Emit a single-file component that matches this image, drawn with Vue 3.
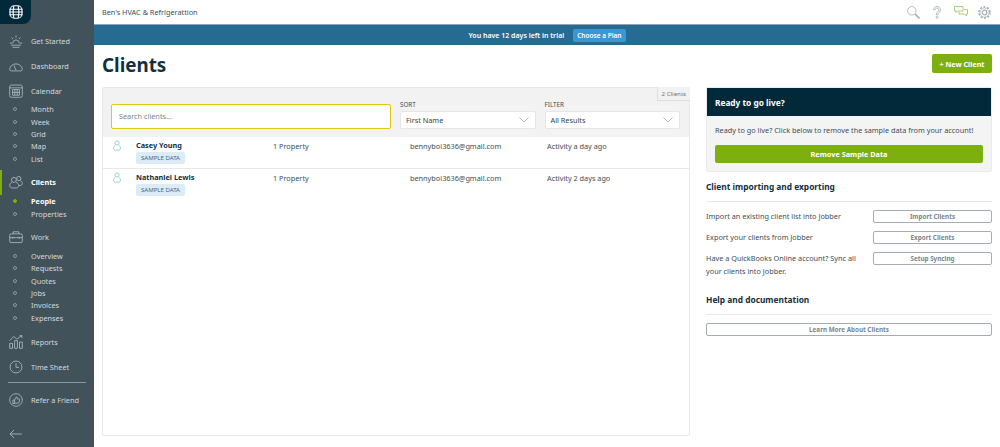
<template>
  <div class="app">
    <aside class="sidebar">
      <div class="logo">
        <svg width="14" height="14" viewBox="0 0 14 14" fill="none" stroke="#fff" stroke-width="1.1">
          <rect x="1" y="0.8" width="12" height="12.4" rx="4.5" />
          <path d="M0.500 4.300h13M0.500 7h13M0.500 9.700h13M4.800 1c-1 4-1 8 0 12M9.200 1c1 4 1 8 0 12" />
        </svg>
      </div>
      <nav class="nav">
        <template v-for="group in nav" :key="group.label">
          <div v-if="group.divider" class="divider"></div>
          <div class="nav-item" :class="{ active: group.active }">
            <span class="nav-icon">
              <svg width="14" height="14" viewBox="0 0 20 20" fill="none" stroke="#b9c2c7" stroke-width="1.1" v-html="group.icon"></svg>
            </span>
            <span>{{ group.label }}</span>
          </div>
          <div v-if="group.children" class="sub-list">
            <div v-for="child in group.children" :key="child" class="sub-item" :class="{ current: child === 'People' }">
              <span class="dot"></span>{{ child }}
            </div>
          </div>
        </template>
      </nav>
      <div class="collapse">
        <svg width="13" height="10" viewBox="0 0 13 10" fill="none" stroke="#b9c2c7" stroke-width="0.8">
          <path d="M13 5H1M5 1 1 5l4 4" />
        </svg>
      </div>
    </aside>

    <div class="main">
      <header class="topbar">
        <span class="company">Ben's HVAC &amp; Refrigerattion</span>
        <div class="top-icons">
          <svg width="13" height="13" viewBox="0 0 13 13" fill="none" stroke="#a3adb2" stroke-width="0.8">
            <circle cx="4.800" cy="4.800" r="4.200" />
            <path d="m8 8 4.500 4.500" stroke-width="1.600" />
          </svg>
          <svg width="8" height="13" viewBox="0 0 8 13" fill="none" stroke="#a3adb2" stroke-width="0.8">
            <path d="M0.500 3.800C0.500 1.800 2 0.500 4 0.500s3.500 1.300 3.500 3.300c0 2.400-2.500 2.500-2.500 5H3.200c0-3 2.700-3 2.700-5C5.900 2.800 5.100 2.100 4 2.100S2.100 2.800 2.100 3.800Z" />
            <circle cx="4" cy="11.300" r="1" />
          </svg>
          <svg width="14" height="12" viewBox="0 0 14 12" fill="none" stroke="#a4c765" stroke-width="0.9">
            <path d="M0.500 0.500h8.500v4.500H3.500L2 6.500V5H0.500ZM10 3.500h3.500v4.500H12.500v2L10.500 8H5V5.500" />
          </svg>
          <svg class="gear" width="13" height="13" viewBox="0 0 13 13" fill="none" stroke="#a3adb2">
            <circle cx="6.500" cy="6.500" r="5.500" stroke-width="1.600" stroke-dasharray="2 1.460" />
            <circle cx="6.500" cy="6.500" r="4.500" stroke-width="0.600" />
            <circle cx="6.500" cy="6.500" r="2.300" stroke-width="1.200" />
          </svg>
        </div>
      </header>

      <div class="trial-banner">
        <span>You have 12 days left in trial</span>
        <button class="plan-btn">Choose a Plan</button>
      </div>

      <div class="content">
        <div class="page-head">
          <h1>Clients</h1>
          <button class="new-btn">+ New Client</button>
        </div>

        <div class="columns">
          <section class="list-card">
            <div class="count-tab">2 Clients</div>
            <div class="list-tools">
              <div class="search">Search clients...</div>
              <div class="tool">
                <label>SORT</label>
                <div class="select">First Name<svg width="10" height="6" viewBox="0 0 10 6" fill="none" stroke="#a3adb2" stroke-width="0.8"><path d="m0.500 0.500 4.500 4.500 4.500-4.500" /></svg></div>
              </div>
              <div class="tool">
                <label>FILTER</label>
                <div class="select">All Results<svg width="10" height="6" viewBox="0 0 10 6" fill="none" stroke="#a3adb2" stroke-width="0.8"><path d="m0.500 0.500 4.500 4.500 4.500-4.500" /></svg></div>
              </div>
            </div>
            <div v-for="client in clients" :key="client.name" class="client-row">
              <svg class="person" width="8" height="11" viewBox="0 0 10 13" fill="none" stroke="#7fcbaa" stroke-width="1">
                <circle cx="5" cy="3.300" r="2.600" />
                <path d="M3 6.500C1.500 7 0.600 8.200 0.600 9.700c0 1.500 1 2.600 2.400 2.600h4c1.400 0 2.400-1.100 2.400-2.600C9.400 8.200 8.500 7 7 6.500" />
              </svg>
              <div class="client-name">
                <strong>{{ client.name }}</strong>
                <span class="badge">SAMPLE DATA</span>
              </div>
              <div class="client-prop">1 Property</div>
              <div class="client-email">bennyboi3636@gmail.com</div>
              <div class="client-activity">{{ client.activity }}</div>
            </div>
          </section>

          <aside class="side">
            <div class="live-card">
              <div class="live-head">Ready to go live?</div>
              <div class="live-body">
                <p>Ready to go live? Click below to remove the sample data from your account!</p>
                <button class="remove-btn">Remove Sample Data</button>
              </div>
            </div>

            <h2>Client importing and exporting</h2>
            <div class="action-row">
              <span>Import an existing client list into Jobber</span>
              <button class="outline-btn">Import Clients</button>
            </div>
            <div class="action-row">
              <span>Export your clients from Jobber</span>
              <button class="outline-btn">Export Clients</button>
            </div>
            <div class="action-row">
              <span>Have a QuickBooks Online account? Sync all your clients into Jobber.</span>
              <button class="outline-btn">Setup Syncing</button>
            </div>

            <h2 class="help">Help and documentation</h2>
            <button class="outline-btn wide">Learn More About Clients</button>
          </aside>
        </div>
      </div>
    </div>
  </div>
</template>

<script setup>
const nav = [
  { label: 'Get Started', icon: '<path d="M5.500 13a4.500 4.500 0 1 1 9 0M1 13h4M15 13h4M3 16h14M5 19h10M10 2v3M3.500 5l2.200 2.200M16.500 5l-2.200 2.200"/>' },
  { label: 'Dashboard', icon: '<path d="M1 15a9 8 0 0 1 18 0c0 1-1 2-2 2H3c-1 0-2-1-2-2ZM10 16 7 9"/>' },
  {
    label: 'Calendar',
    icon: '<rect x="1" y="1.500" width="18" height="17.500" rx="2.500"/><path d="M1 5.500h18M5 8h10v8H5zM8.300 8v8M11.700 8v8M5 12h10"/>',
    children: ['Month', 'Week', 'Grid', 'Map', 'List']
  },
  {
    label: 'Clients',
    active: true,
    icon: '<circle cx="7" cy="7" r="3.500"/><circle cx="14" cy="5" r="3"/><path d="M4 10.500C2 11.500 1 13 1 15s1.500 3.500 3.500 3.500h6c2 0 3.500-1.500 3.500-3.500s-1-3.500-4-4.500M16 8c2 .5 3 2 3 4s-1.500 3-3.500 3H14"/>',
    children: ['People', 'Properties']
  },
  {
    label: 'Work',
    icon: '<rect x="1" y="5.500" width="18" height="12.500" rx="2"/><path d="M6 5.500V2.500h8v3M1 11h18M5.500 9.500v3M14.500 9.500v3"/>',
    children: ['Overview', 'Requests', 'Quotes', 'Jobs', 'Invoices', 'Expenses']
  },
  { label: 'Reports', icon: '<path d="M1 12h4v7H1zM8 8h4v11H8zM15 10h4v9h-4zM1 8l6-6 4 4 7-5M15 1h3.500v3.500"/>' },
  { label: 'Time Sheet', icon: '<circle cx="10" cy="10" r="8.500"/><path d="M10 4.500V10.500h4.500"/>' },
  { label: 'Refer a Friend', divider: true, icon: '<circle cx="10" cy="10" r="9"/><path d="M5.500 10h2.500v5H5.500zM8 10l2.500-4.500c1 0 1.500 1 1 3H14.500c.7 0 1 .6.800 1.200l-1.200 4.300c-.1.400-.5.500-.8.500H8"/>' }
]

const clients = [
  { name: 'Casey Young', activity: 'Activity a day ago' },
  { name: 'Nathaniel Lewis', activity: 'Activity 2 days ago' }
]
</script>

<style>
html, body {
  margin: 0;
  background: #fff;
}
</style>

<style scoped>
.app {
  display: flex;
  width: 1000px;
  height: 447px;
  overflow: hidden;
  font-family: "Noto Sans", sans-serif;
  font-size: 7.3px;
  color: #3e4e56;
}

.sidebar {
  width: 94px;
  flex-shrink: 0;
  display: flex;
  flex-direction: column;
  background: #42525a;
  color: #d4dadd;
}

.logo {
  width: 31px;
  height: 24px;
  display: flex;
  align-items: center;
  justify-content: center;
  background: #012939;
  border-bottom-right-radius: 8px;
}

.nav {
  display: flex;
  flex-direction: column;
  padding-top: 4px;
}

.nav-item {
  position: relative;
  height: 25px;
  display: flex;
  align-items: center;
  gap: 6px;
  padding-left: 6px;
}

.nav-item.active {
  color: #fff;
  font-weight: 700;
}

.nav-item.active::before {
  content: "";
  position: absolute;
  left: 0;
  top: 0;
  width: 2px;
  height: 25px;
  background: #7db00e;
}

.nav-icon {
  width: 19px;
  height: 20px;
  display: flex;
  align-items: center;
  justify-content: center;
}

.sub-list {
  display: flex;
  flex-direction: column;
  padding-bottom: 5px;
}

.sub-item {
  height: 12.4px;
  display: flex;
  align-items: center;
  gap: 14px;
  padding-left: 13px;
}

.sub-item.current {
  color: #fff;
  font-weight: 700;
}

.dot {
  width: 4px;
  height: 4px;
  border-radius: 50%;
  border: 0.8px solid #8b979d;
  box-sizing: border-box;
  flex-shrink: 0;
}

.current .dot {
  background: #7db00e;
  border-color: #7db00e;
}

.divider {
  height: 1px;
  margin: 3px 8px 4px;
  background: #8b979d;
}

.collapse {
  margin-top: auto;
  height: 18px;
  padding-left: 9px;
  display: flex;
  align-items: flex-start;
}

.main {
  flex: 1;
  min-width: 0;
  display: flex;
  flex-direction: column;
}

.topbar {
  height: 24px;
  display: flex;
  align-items: center;
  justify-content: space-between;
  padding: 0 9px 0 8px;
}

.top-icons {
  display: flex;
  align-items: center;
  gap: 13px;
}

.gear {
  margin-left: -3px;
}

.trial-banner {
  height: 21px;
  box-sizing: border-box;
  display: flex;
  align-items: center;
  justify-content: center;
  gap: 9px;
  background: #276b93;
  border-top: 1px solid #8da6b5;
  color: #fff;
  font-size: 7px;
  font-weight: 600;
}

.plan-btn {
  height: 13px;
  padding: 0 4px;
  border: 0;
  border-radius: 2px;
  background: #3b97d3;
  color: #fff;
  font: 600 6.5px "Noto Sans", sans-serif;
}

.content {
  flex: 1;
  padding: 9px 8px 11px;
  display: flex;
  flex-direction: column;
  min-height: 0;
}

.page-head {
  height: 33px;
  flex-shrink: 0;
  display: flex;
  align-items: flex-start;
  justify-content: space-between;
}

h1 {
  margin: 0;
  font-size: 18.8px;
  line-height: 22px;
  font-weight: 700;
  color: #12303f;
}

.new-btn {
  width: 60px;
  height: 19px;
  padding: 0;
  border: 0;
  border-radius: 2px;
  background: #7db00e;
  color: #fff;
  font: 700 7.2px "Noto Sans", sans-serif;
}

.columns {
  flex: 1;
  min-height: 0;
  display: flex;
  gap: 16px;
}

.list-card {
  position: relative;
  width: 588px;
  flex-shrink: 0;
  box-sizing: border-box;
  border: 1px solid #e6e8e9;
  border-radius: 2px;
}

.count-tab {
  position: absolute;
  top: -1px;
  right: -1px;
  height: 13px;
  padding: 0 4px;
  display: flex;
  align-items: center;
  border-left: 1px solid #dcdfe0;
  border-bottom: 1px solid #dcdfe0;
  color: #6a777d;
  font-size: 6.1px;
  background: #f2f2f2;
}

.list-tools {
  height: 48.5px;
  box-sizing: border-box;
  display: flex;
  align-items: flex-end;
  gap: 9px;
  padding: 0 8px 8px;
  background: #f2f2f2;
}

.search {
  width: 280px;
  height: 25px;
  box-sizing: border-box;
  padding-left: 7px;
  display: flex;
  align-items: center;
  border: 1px solid #e0c90f;
  border-radius: 2px;
  background: #fff;
  color: #7a868c;
}

.tool {
  width: 135.5px;
}

.tool label {
  display: block;
  margin-bottom: 2px;
  font-size: 6.3px;
  line-height: 9px;
}

.select {
  height: 18px;
  box-sizing: border-box;
  padding: 0 6px 0 5px;
  display: flex;
  align-items: center;
  justify-content: space-between;
  background: #fff;
  border: 1px solid #e4e6e7;
  border-radius: 2px;
  color: #2f434d;
}

.client-row {
  height: 32px;
  display: flex;
  align-items: flex-start;
  padding-top: 3.5px;
  box-sizing: border-box;
  border-bottom: 1px solid #e6e8e9;
}

.client-row:last-child {
  border-bottom: 0;
}

.person {
  margin: 0 0 0 10px;
  flex-shrink: 0;
}

.client-name {
  width: 137px;
  margin-left: 15px;
  display: flex;
  flex-direction: column;
  align-items: flex-start;
  gap: 1px;
}

.client-name strong {
  color: #12303f;
  line-height: 11px;
}

.badge {
  height: 12px;
  padding: 0 5px;
  display: flex;
  align-items: center;
  border-radius: 2px;
  background: #dcebf5;
  color: #2c6c94;
  font-size: 6.05px;
}

.client-prop,
.client-email {
  width: 137px;
  line-height: 13px;
}

.client-activity {
  line-height: 13px;
}

.side {
  flex: 1;
  min-width: 0;
}

.live-card {
  border: 1px solid #e9ebec;
  border-radius: 2px;
  background: #f4f4f4;
}

.live-head {
  height: 28px;
  padding-left: 8px;
  display: flex;
  align-items: center;
  background: #012939;
  color: #fff;
  font-size: 8.3px;
  font-weight: 700;
}

.live-body {
  padding: 8px;
}

.live-body p {
  margin: 0 0 8px;
  line-height: 13px;
}

.remove-btn {
  display: block;
  width: 100%;
  height: 18px;
  padding: 0;
  border: 0;
  border-radius: 2px;
  background: #7db00e;
  color: #fff;
  font: 700 7.3px "Noto Sans", sans-serif;
}

h2 {
  margin: 9px 0 8px;
  padding-bottom: 8px;
  border-bottom: 1px solid #e6e8e9;
  font-size: 8.35px;
  line-height: 12px;
  font-weight: 700;
  color: #12303f;
}

.help {
  margin-top: 16px;
}

.action-row {
  display: flex;
  justify-content: space-between;
  align-items: flex-start;
  margin-bottom: 8px;
  line-height: 13px;
}

.action-row span {
  width: 160px;
}

.outline-btn {
  width: 119px;
  height: 13px;
  padding: 0;
  box-sizing: border-box;
  border: 1px solid #a3adb2;
  border-radius: 2px;
  background: #fff;
  color: #7a868c;
  font: 700 6.3px "Noto Sans", sans-serif;
}

.outline-btn.wide {
  display: block;
  width: 100%;
}
</style>
